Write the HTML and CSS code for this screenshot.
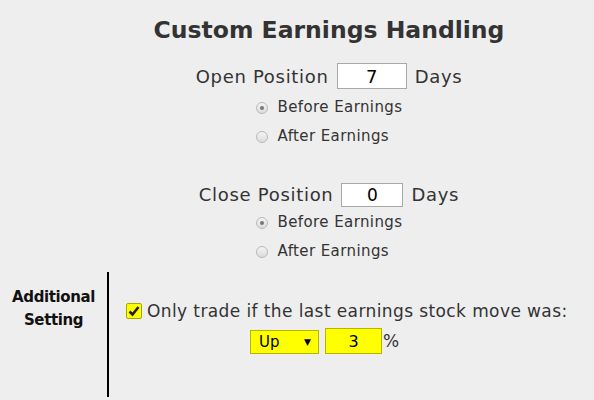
FILE: index.html
```html
<!DOCTYPE html>
<html>
<head>
  <title>Custom Earnings Handling</title>
  <meta name="viewport" content="width=device-width, initial-scale=1.0">
  <link rel="stylesheet" href="styles.css">
</head>
<body>
  <div class="earnings">
    <h2 class="title">Custom Earnings Handling</h2>

    <!-- Open -->
    <div class="pos-row">
      <span>Open Position</span>
      <input class="days" type="text" value="7">
      <span>Days</span>
    </div>
    <div class="radios">
      <label class="radio"><span class="dot checked"></span>Before Earnings</label>
      <label class="radio"><span class="dot"></span>After Earnings</label>
    </div>

    <!-- Close -->
    <div class="pos-row close">
      <span>Close Position</span>
      <input class="days small" type="text" value="0">
      <span>Days</span>
    </div>
    <div class="radios tight">
      <label class="radio"><span class="dot checked"></span>Before Earnings</label>
      <label class="radio"><span class="dot"></span>After Earnings</label>
    </div>
  </div>

  <!-- Additional -->
  <div class="extra">
    <div class="extra-label">Additional<br>Setting</div>
    <div class="extra-body">
      <div class="only">
        <span class="check">
          <svg width="12" height="12" viewBox="0 0 12 12"><path d="M1.5 6.5 L4.5 9.5 L10.5 2" fill="none" stroke="#222" stroke-width="2.6"/></svg>
        </span>
        Only trade if the last earnings stock move was:
      </div>
      <div class="move">
        <span class="pick">Up<span class="arrow">▼</span></span>
        <input class="pct" type="text" value="3">
        <span>%</span>
      </div>
    </div>
  </div>
</body>
</html>
```

FILE: styles.css
```css
body {
  margin: 0;
  background-color: #eeeeee;
  font-family: "DejaVu Sans", Verdana, sans-serif;
  color: #333;
}
.earnings {
  padding-left: 64px;
  display: flex;
  flex-direction: column;
  align-items: center;
}
.title {
  margin: 15px 0 0;
  font-size: 23.5px;
  line-height: 30px;
  font-weight: bold;
  color: #333;
}
.pos-row {
  margin-top: 18px;
  height: 26px;
  display: flex;
  align-items: center;
  gap: 8px;
  font-size: 18px;
  letter-spacing: 0.7px;
}
.pos-row.close {
  margin-top: 31px;
  height: 25px;
}
.days {
  box-sizing: border-box;
  width: 70px;
  height: 26px;
  border: 1px solid #a9a9a9;
  background: #fff;
  text-align: center;
  font-family: "DejaVu Sans", Verdana, sans-serif;
  font-size: 18px;
  color: #000;
  padding: 0;
}
.days.small {
  width: 62px;
  height: 24px;
  font-size: 17px;
}
.radios {
  margin-top: 4px;
  display: flex;
  flex-direction: column;
  align-items: flex-start;
}
.radios.tight {
  margin-top: 1px;
}
.radio {
  display: flex;
  align-items: center;
  gap: 10px;
  font-size: 15px;
  line-height: 29px;
  letter-spacing: 0.4px;
}
.dot {
  box-sizing: border-box;
  width: 12px;
  height: 12px;
  border-radius: 50%;
  border: 1px solid #b9b9b9;
  background: linear-gradient(#f4f4f4, #dcdcdc);
  display: flex;
  align-items: center;
  justify-content: center;
}
.dot.checked::after {
  content: "";
  width: 4px;
  height: 4px;
  border-radius: 50%;
  background: #777;
}
.extra {
  margin-top: 6px;
  display: flex;
}
.extra-label {
  width: 107px;
  padding-top: 14px;
  text-align: center;
  font-size: 15px;
  font-weight: bold;
  line-height: 23px;
  letter-spacing: -0.4px;
  color: #111;
}
.extra-body {
  border-left: 2px solid #000;
  height: 125px;
  box-sizing: border-box;
  padding-top: 29px;
  flex: 1;
}
.only {
  margin-left: 17px;
  display: flex;
  align-items: center;
  gap: 5px;
  font-size: 17px;
  line-height: 20px;
  letter-spacing: 0.4px;
}
.check {
  box-sizing: border-box;
  width: 16px;
  height: 16px;
  background: #ffff00;
  border: 1px solid #a8a800;
  border-radius: 2px;
  display: flex;
  align-items: center;
  justify-content: center;
}
.move {
  margin-top: 7px;
  padding-left: 141px;
  display: flex;
  align-items: flex-end;
  font-size: 17px;
  line-height: 26px;
}
.pick {
  box-sizing: border-box;
  width: 69px;
  height: 24px;
  padding: 0 7px 0 8px;
  background: #ffff00;
  border: 1px solid #b5b500;
  display: flex;
  align-items: center;
  justify-content: space-between;
  font-size: 15px;
  color: #000;
}
.arrow {
  font-size: 9px;
}
.pct {
  box-sizing: border-box;
  margin-left: 6px;
  margin-right: 1px;
  width: 57px;
  height: 26px;
  padding: 0;
  background: #ffff00;
  border: 1px solid #b5b500;
  text-align: center;
  font-family: "DejaVu Sans", Verdana, sans-serif;
  font-size: 16px;
  color: #000;
}
```
